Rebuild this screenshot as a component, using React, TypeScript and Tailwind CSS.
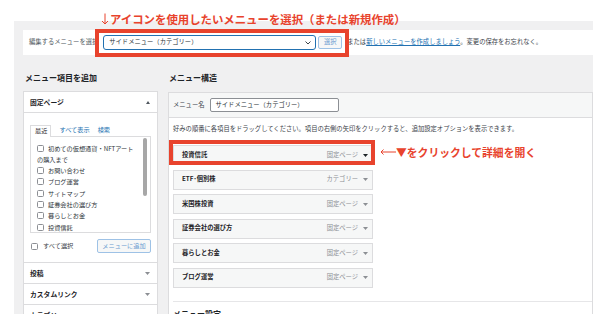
import React from "react";

const Down = ({ c = "#8c8f94" }: { c?: string }) => (
  <svg width="5" height="3" viewBox="0 0 5 3" className="shrink-0">
    <path d="M0 0 L5 0 L2.5 3 Z" fill={c} />
  </svg>
);

const Up = ({ c = "#8c8f94" }: { c?: string }) => (
  <svg width="4" height="3" viewBox="0 0 4 3" className="shrink-0">
    <path d="M0 3 L4 3 L2 0 Z" fill={c} />
  </svg>
);

const Check = () => (
  <span className="inline-block w-[7px] h-[7px] border border-[#8c8f94] rounded-[1.5px] bg-white align-[-1px] mr-[4px]" />
);

const pages = [
  ["初めての仮想通貨・NFTアート", "の購入まで"],
  ["お問い合わせ"],
  ["ブログ運営"],
  ["サイトマップ"],
  ["証券会社の選び方"],
  ["暮らしとお金"],
  ["投資信託"],
];

const items = [
  ["投資信託", "固定ページ"],
  ["ETF･個別株", "カテゴリー"],
  ["米国株投資", "固定ページ"],
  ["証券会社の選び方", "固定ページ"],
  ["暮らしとお金", "固定ページ"],
  ["ブログ運営", "固定ページ"],
];

export default function App() {
  return (
    <div className="relative w-[600px] h-[314px] overflow-hidden bg-white font-['Noto_Sans_CJK_JP',sans-serif] text-[#1d2327]">
      <div className="ml-[14px] mt-[21px] w-[579px] h-[293px] bg-[#f0f0f1] pl-[9px] pt-[9px]">
        {/* top select bar */}
        <div className="h-[25px] bg-white flex items-center pl-[6px] text-[6.3px] leading-none whitespace-nowrap">
          <span className="text-[#50575e]">編集するメニューを選択</span>
          <div className="ml-[5px] w-[213px] h-[15px] border border-[#2271b1] rounded-[3px] flex items-center justify-between pl-[5px] pr-[4px] bg-white">
            <span className="text-[#2c3338]">サイドメニュー（カテゴリー）</span>
            <svg width="6" height="4" viewBox="0 0 6 4">
              <path d="M0.5 0.5 L3 3 L5.5 0.5" stroke="#3c434a" strokeWidth="1" fill="none" />
            </svg>
          </div>
          <div className="ml-[2px] w-[24px] h-[13px] border border-[#9ec2e6] rounded-[2px] bg-[#f6f7f7] text-[#6a9bd0] flex items-center justify-center">
            選択
          </div>
          <span className="ml-[5px] text-[#3c434a]">
            または<span className="text-[#2271b1] underline">新しいメニューを作成しましょう</span>。変更の保存をお忘れなく。
          </span>
        </div>

        <div className="mt-[18px] flex gap-[10px]">
          {/* left column */}
          <div className="w-[135px] shrink-0">
            <div className="pl-[2px] h-[10px] leading-[10px] text-[8px] font-bold mb-[8px] whitespace-nowrap">メニュー項目を追加</div>
            <div className="border border-[#dcdcde] bg-white">
              <div className="h-[21px] flex items-center justify-between pl-[6px] pr-[7px] border-b border-[#dcdcde]">
                <span className="text-[6.8px] font-bold leading-none">固定ページ</span>
                <Up c="#50575e" />
              </div>
              <div className="px-[6px] pt-[12px] pb-[9px] border-b border-[#dcdcde]">
                <div className="flex items-end h-[11px] text-[6.2px] leading-none">
                  <div className="h-[12px] -mb-[1px] relative z-10 border border-b-0 border-[#dcdcde] bg-white pl-[4px] pr-[3px] flex items-center text-[#1d2327]">
                    最近
                  </div>
                  <span className="ml-[8px] mb-[3px] text-[#2271b1]">すべて表示</span>
                  <span className="ml-[8px] mb-[3px] text-[#2271b1]">検索</span>
                </div>
                <div className="h-[97px] border border-[#dcdcde] flex overflow-hidden">
                  <div className="flex-1 pl-[6px] pt-[7px] text-[6.2px] leading-[10.5px] text-[#2c3338] flex flex-col gap-[0.9px]">
                    {pages.map((p, i) => (
                      <div key={i} className="whitespace-nowrap">
                        <Check />
                        {p[0]}
                        {p[1] && (
                          <>
                            <br />
                            {p[1]}
                          </>
                        )}
                      </div>
                    ))}
                  </div>
                  <div className="w-[7px] pt-[1px] pr-[2px]">
                    <div className="w-[4px] h-[58px] rounded-[2px] bg-[#a7a7a7]" />
                  </div>
                </div>
                <div className="mt-[6px] flex items-center justify-between">
                  <div className="flex items-center text-[6.2px] leading-none text-[#3c434a] pl-[1px]">
                    <span className="inline-block w-[7px] h-[7px] border border-[#8c8f94] rounded-[1.5px] bg-white mr-[5px]" />
                    すべて選択
                  </div>
                  <div className="w-[54px] h-[14px] border border-[#9ec2e6] rounded-[2px] bg-[#f6f7f7] text-[#6a9bd0] text-[6.2px] leading-none flex items-center justify-center">
                    メニューに追加
                  </div>
                </div>
              </div>
              {["投稿", "カスタムリンク", "カテゴリー"].map((t) => (
                <div key={t} className="h-[21px] flex items-center justify-between pl-[6px] pr-[7px] border-b border-[#dcdcde]">
                  <span className="text-[6.8px] font-bold leading-none">{t}</span>
                  <Down c="#8c8f94" />
                </div>
              ))}
            </div>
          </div>

          {/* right column */}
          <div className="w-[425px] shrink-0">
            <div className="pl-[1px] h-[10px] leading-[10px] text-[8px] font-bold mb-[9px] whitespace-nowrap">メニュー構造</div>
            <div className="border border-[#dcdcde] bg-white h-[240px]">
              <div className="h-[25px] bg-[#f6f7f7] border-b border-[#dcdcde] flex items-center pl-[4px]">
                <span className="text-[6.3px] leading-none text-[#3c434a]">メニュー名</span>
                <div className="ml-[6px] w-[129px] h-[14px] border border-[#8c8f94] rounded-[2px] bg-white flex items-center pl-[4px] text-[6.3px] leading-none text-[#2c3338]">
                  サイドメニュー（カテゴリー）
                </div>
              </div>
              <div className="pl-[4px]">
                <div className="pt-[6px] h-[16px] text-[6.3px] leading-[10px] text-[#3c434a] whitespace-nowrap">
                  好みの順番に各項目をドラッグしてください。項目の右側の矢印をクリックすると、追加設定オプションを表示できます。
                </div>
                <div className="mt-[11px] flex flex-col gap-[4.5px]">
                  {items.map(([n, t], i) => (
                    <div key={n} className="w-[200px] h-[20px] border border-[#dcdcde] bg-[#f6f7f7] flex items-center pl-[8px] pr-[4px]">
                      <span className="flex-1 text-[6.3px] font-bold leading-none whitespace-nowrap">{n}</span>
                      <span className="text-[6.3px] leading-none text-[#8c8f94] whitespace-nowrap">{t}</span>
                      <span className="ml-[5px]">
                        <Down c={i === 0 ? "#1d2327" : "#8c8f94"} />
                      </span>
                    </div>
                  ))}
                </div>
                <div className="mt-[13px] border-t border-[#e6e6e8] pt-[7px] text-[8px] font-bold leading-[10px]">メニュー設定</div>
              </div>
            </div>
          </div>
        </div>
      </div>

      {/* annotations */}
      <div className="absolute left-[101px] top-[12px] flex items-center text-[11.4px] font-bold leading-[14px] text-[#e8432d] whitespace-nowrap">
        <svg width="8" height="12" viewBox="0 0 8 12" className="mr-[1px]">
          <path d="M4 0.5 V11 M1 8 L4 11 L7 8" stroke="#e8432d" strokeWidth="1" fill="none" />
        </svg>
        アイコンを使用したいメニューを選択（または新規作成）
      </div>
      <div className="absolute left-[95px] top-[29px] w-[254px] h-[28px] border-4 border-[#e8432d]" />
      <div className="absolute left-[169px] top-[140px] w-[206px] h-[25px] border-4 border-[#e8432d]" />
      <div className="absolute left-[380px] top-[145px] flex items-center text-[10.8px] font-bold leading-[14px] text-[#e8432d] whitespace-nowrap">
        <svg width="16" height="8" viewBox="0 0 16 8">
          <path d="M16 4 H1 M3.5 1.5 L1 4 L3.5 6.5" stroke="#e8432d" strokeWidth="1" fill="none" />
        </svg>
        ▼をクリックして詳細を開く
      </div>
    </div>
  );
}
